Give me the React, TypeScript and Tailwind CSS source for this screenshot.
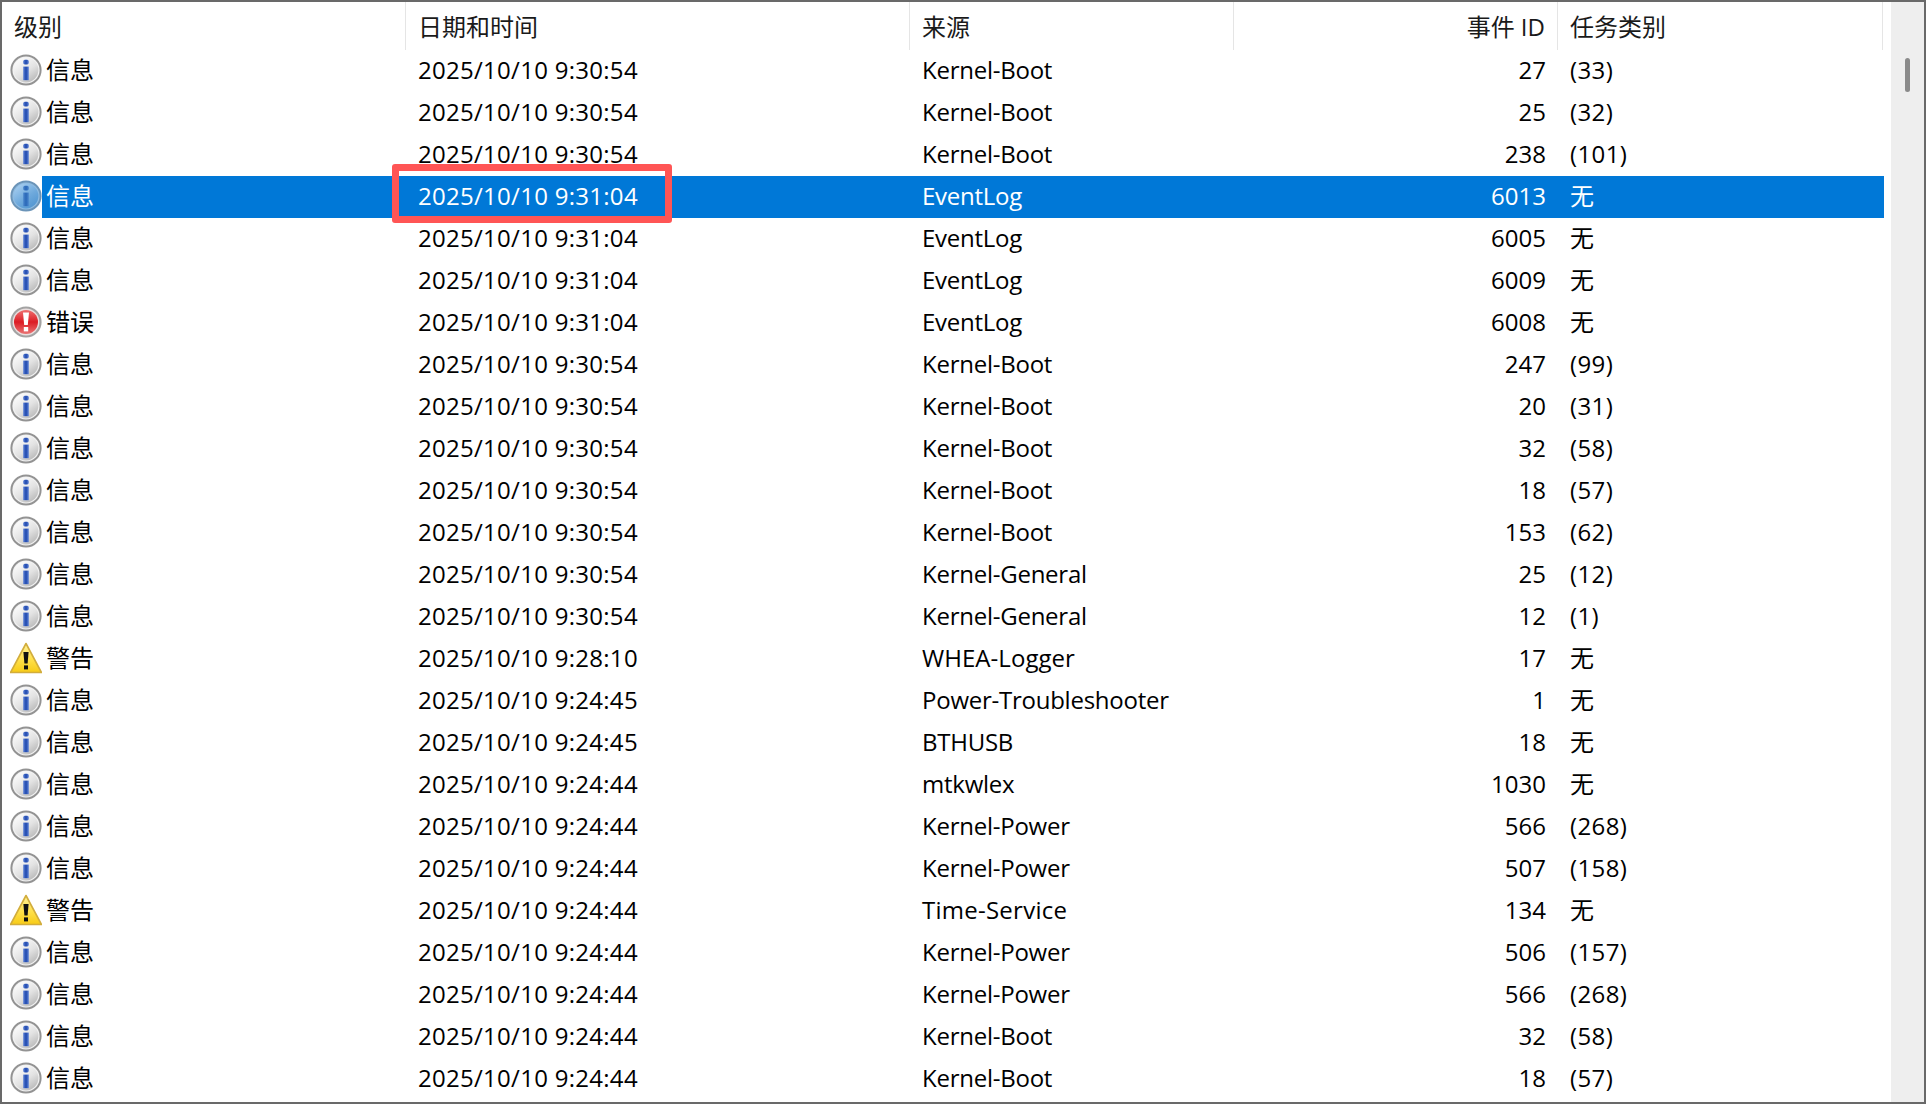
import React from 'react';

type Level = 'info' | 'error' | 'warning';

interface EventRow {
  level: Level;
  date: string;
  source: string;
  id: number;
  task: string;
}

const LEVEL_LABEL: Record<Level, string> = { info: '信息', error: '错误', warning: '警告' };

const raw: [Level, string, string, number, string][] = [
  ['info', '2025/10/10 9:30:54', 'Kernel-Boot', 27, '(33)'],
  ['info', '2025/10/10 9:30:54', 'Kernel-Boot', 25, '(32)'],
  ['info', '2025/10/10 9:30:54', 'Kernel-Boot', 238, '(101)'],
  ['info', '2025/10/10 9:31:04', 'EventLog', 6013, '无'],
  ['info', '2025/10/10 9:31:04', 'EventLog', 6005, '无'],
  ['info', '2025/10/10 9:31:04', 'EventLog', 6009, '无'],
  ['error', '2025/10/10 9:31:04', 'EventLog', 6008, '无'],
  ['info', '2025/10/10 9:30:54', 'Kernel-Boot', 247, '(99)'],
  ['info', '2025/10/10 9:30:54', 'Kernel-Boot', 20, '(31)'],
  ['info', '2025/10/10 9:30:54', 'Kernel-Boot', 32, '(58)'],
  ['info', '2025/10/10 9:30:54', 'Kernel-Boot', 18, '(57)'],
  ['info', '2025/10/10 9:30:54', 'Kernel-Boot', 153, '(62)'],
  ['info', '2025/10/10 9:30:54', 'Kernel-General', 25, '(12)'],
  ['info', '2025/10/10 9:30:54', 'Kernel-General', 12, '(1)'],
  ['warning', '2025/10/10 9:28:10', 'WHEA-Logger', 17, '无'],
  ['info', '2025/10/10 9:24:45', 'Power-Troubleshooter', 1, '无'],
  ['info', '2025/10/10 9:24:45', 'BTHUSB', 18, '无'],
  ['info', '2025/10/10 9:24:44', 'mtkwlex', 1030, '无'],
  ['info', '2025/10/10 9:24:44', 'Kernel-Power', 566, '(268)'],
  ['info', '2025/10/10 9:24:44', 'Kernel-Power', 507, '(158)'],
  ['warning', '2025/10/10 9:24:44', 'Time-Service', 134, '无'],
  ['info', '2025/10/10 9:24:44', 'Kernel-Power', 506, '(157)'],
  ['info', '2025/10/10 9:24:44', 'Kernel-Power', 566, '(268)'],
  ['info', '2025/10/10 9:24:44', 'Kernel-Boot', 32, '(58)'],
  ['info', '2025/10/10 9:24:44', 'Kernel-Boot', 18, '(57)'],
];

const rows: EventRow[] = raw.map(([level, date, source, id, task]) => ({ level, date, source, id, task }));

const SELECTED_INDEX = 3;

const sourceTracking = (source: string) => {
  if (source === 'Time-Service') return 'tracking-[0.25px]';
  if (source === 'WHEA-Logger') return 'tracking-[0.05px]';
  return 'tracking-[-0.25px]';
};

const LevelIcon: React.FC<{ level: Level; selected?: boolean; uid: string }> = ({ level, selected, uid }) => {
  if (level === 'warning') {
    return (
      <svg width="32" height="32" viewBox="0 0 32 32">
        <defs>
          <linearGradient id={`w-${uid}`} x1="0" y1="0" x2="0" y2="1">
            <stop offset="0" stopColor="#fff29a" />
            <stop offset="0.55" stopColor="#ffe04a" />
            <stop offset="1" stopColor="#f7cb16" />
          </linearGradient>
        </defs>
        <path d="M16 1.5 L31.5 30.5 L0.5 30.5 Z" fill={`url(#w-${uid})`} stroke="#d2ad3c" strokeWidth="1.6" strokeLinejoin="round" />
        <path d="M13.4 10 H18.6 L17.6 21.5 H14.4 Z" fill="#111" />
        <rect x="14" y="23.4" width="4" height="4" fill="#111" />
      </svg>
    );
  }

  if (level === 'error') {
    return (
      <svg width="32" height="32" viewBox="0 0 32 32">
        <defs>
          <linearGradient id={`e-${uid}`} x1="0" y1="0" x2="0" y2="1">
            <stop offset="0" stopColor="#ee7070" />
            <stop offset="0.5" stopColor="#dc1c24" />
            <stop offset="1" stopColor="#ea7474" />
          </linearGradient>
        </defs>
        <circle cx="16" cy="16" r="15.6" fill="#a3a3a3" />
        <circle cx="16" cy="16" r="13.4" fill="#e9dfdf" />
        <circle cx="16" cy="16" r="12" fill={`url(#e-${uid})`} />
        <path d="M13 6.5 H19 L17.8 19 H14.2 Z" fill="#fff" />
        <rect x="13.8" y="21" width="4.4" height="4.4" fill="#fff" />
      </svg>
    );
  }

  return (
    <svg width="32" height="32" viewBox="0 0 32 32">
      <defs>
        <linearGradient id={`i-${uid}`} x1="0.15" y1="0" x2="0.85" y2="1">
          <stop offset="0" stopColor={selected ? '#a9cff0' : '#ffffff'} />
          <stop offset="0.55" stopColor={selected ? '#6ea9dc' : '#e2e2e2'} />
          <stop offset="1" stopColor={selected ? '#4f94d0' : '#b4b4b4'} />
        </linearGradient>
        <linearGradient id={`s-${uid}`} x1="0" y1="0" x2="1" y2="0">
          <stop offset="0" stopColor={selected ? '#4a86cc' : '#5f84d6'} />
          <stop offset="0.5" stopColor={selected ? '#2a68b8' : '#1f48ae'} />
          <stop offset="1" stopColor={selected ? '#4a86cc' : '#5f84d6'} />
        </linearGradient>
      </defs>
      <circle cx="16" cy="16" r="15.6" fill={selected ? '#6b94b8' : '#939393'} />
      <circle cx="16" cy="16" r="13.6" fill={selected ? '#8fbbe0' : '#f2f2f2'} />
      <circle cx="16" cy="16" r="12.4" fill={`url(#i-${uid})`} />
      <rect x="13.2" y="5.8" width="5.6" height="4.6" rx="1.6" fill={`url(#s-${uid})`} />
      <rect x="13.2" y="12.6" width="5.6" height="13.6" fill={`url(#s-${uid})`} />
    </svg>
  );
};

const App: React.FC = () => {
  return (
    <div
      className="relative flex w-[1926px] h-[1104px] overflow-hidden border-2 border-[#696969] bg-white text-[24px] text-black"
      style={{ fontFamily: '"Open Sans", "Noto Sans CJK SC", sans-serif' }}
    >
      <div className="w-[1889px] shrink-0">
        {/* Column headers */}
        <div className="flex h-[48px] w-[1881px] items-center text-[#1a1a1a]">
          <div className="w-[404px] h-full pl-3 pt-[2px] flex items-center border-r border-[#e5e5e5]">级别</div>
          <div className="w-[504px] h-full pl-3 pt-[2px] flex items-center border-r border-[#e5e5e5]">日期和时间</div>
          <div className="w-[324px] h-full pl-3 pt-[2px] flex items-center border-r border-[#e5e5e5]">来源</div>
          <div className="w-[324px] h-full pr-3 pt-[2px] flex items-center justify-end border-r border-[#e5e5e5]">事件 ID</div>
          <div className="w-[325px] h-full pl-3 pt-[2px] flex items-center border-r border-[#e5e5e5]">任务类别</div>
        </div>

        {/* Event rows */}
        {rows.map((row, i) => {
          const selected = i === SELECTED_INDEX;
          return (
            <div key={i} className="flex h-[42px] w-[1882px]">
              <div className="w-[40px] shrink-0 pl-2 pt-1">
                <LevelIcon level={row.level} selected={selected} uid={String(i)} />
              </div>
              <div className={`flex flex-1 items-center pb-[2px] ${selected ? 'bg-[#0078d7] text-white' : ''}`}>
                <div className="w-[364px] pl-1">{LEVEL_LABEL[row.level]}</div>
                <div className="w-[504px] pl-3 tracking-[0.28px]">{row.date}</div>
                <div className={`w-[324px] pl-3 ${sourceTracking(row.source)}`}>{row.source}</div>
                <div className="w-[324px] pr-3 text-right">{row.id}</div>
                <div className="flex-1 pl-3 tracking-[0.4px]">{row.task}</div>
              </div>
            </div>
          );
        })}
      </div>

      {/* Scrollbar */}
      <div className="flex-1 bg-[#eeeeee] pt-[56px] pl-[14px]">
        <div className="w-[5px] h-[34px] rounded-full bg-[#8a8a8a]" />
      </div>

      {/* Red annotation around the selected date */}
      <div className="absolute left-[390px] top-[162px] w-[280px] h-[59px] rounded-[3px] border-[7px] border-[#ff5555]" />
    </div>
  );
};

export default App;
